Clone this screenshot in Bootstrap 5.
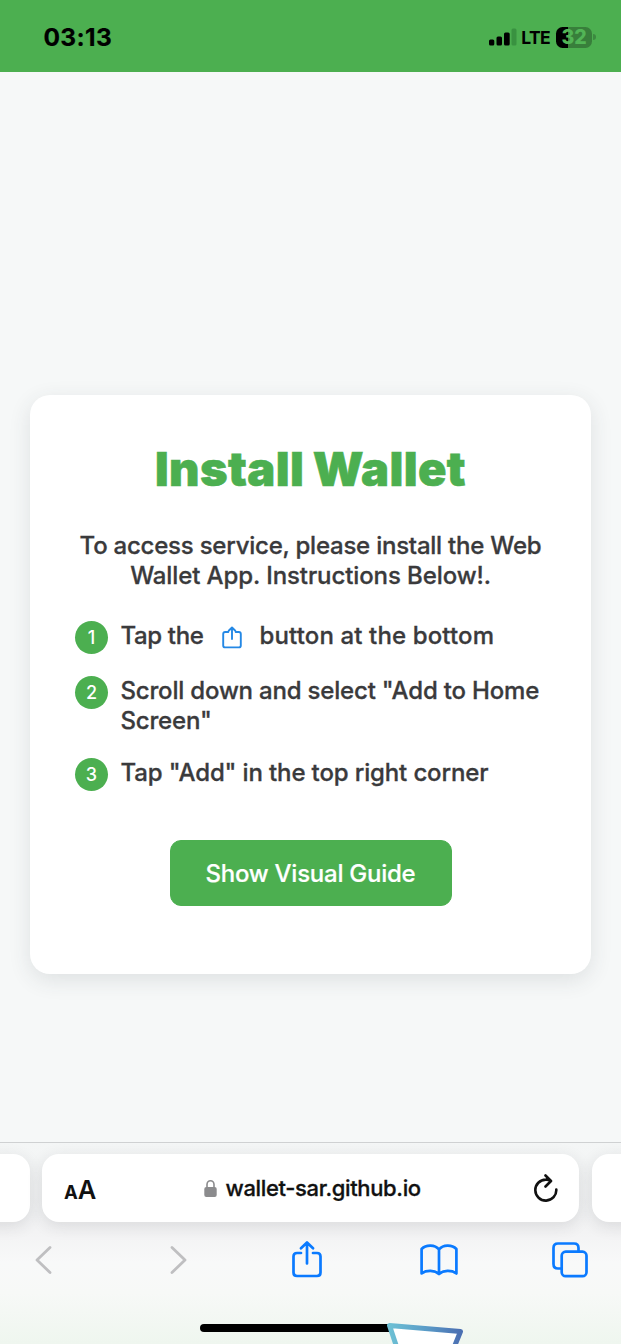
<!DOCTYPE html>
<html lang="en">
<head>
<meta charset="utf-8">
<meta name="viewport" content="width=device-width, initial-scale=1">
<title>Install Wallet</title>
<link href="https://cdn.jsdelivr.net/npm/bootstrap@5.3.0/dist/css/bootstrap.min.css" rel="stylesheet">
<style>
  :root { --brand: #4caf50; --ios-blue: #0a7aff; }
  body { font-family: Inter, "Liberation Sans", sans-serif; background: #f6f8f8; color: #3a3a3c; height: 1344px; overflow: hidden; }
  svg { display: block; flex: none; }
  .status-bar { height: 71.5px; background: var(--brand); color: #000; padding: 3px 25.5px 0 43.5px; }
  .clock { font-size: 24.5px; font-weight: 700; letter-spacing: .35px; -webkit-text-stroke: .2px #000; }
  .carrier { font-size: 17.5px; font-weight: 700; letter-spacing: -.65px; padding-top: 1px; margin: 0 6px 0 4.5px; }
  .battery { width: 36px; height: 21px; border-radius: 6.5px; background: linear-gradient(90deg, #000 11.5px, #387f3b 11.5px); color: #52b556; font-size: 19.5px; font-weight: 800; letter-spacing: 0; line-height: 21px; }
  .battery-tip { width: 2.5px; height: 6px; margin-left: 1px; border-radius: 0 3px 3px 0; background: #3c8940; }
  .page-area { height: 1070.5px; padding: 323px 30px 0; }
  .install-card { height: 579px; border: 0; border-radius: 20px; padding: 43px 45px 0; box-shadow: 0 6px 22px rgba(50,55,65,.12); }
  .install-card h1 { font-size: 47px; line-height: 62px; font-weight: 900; color: var(--brand); letter-spacing: .35px; word-spacing: -1px; -webkit-text-stroke: .6px var(--brand); }
  .intro, .steps { font-size: 24px; line-height: 30px; font-weight: 500; -webkit-text-stroke: .3px currentColor; }
  .intro { margin: 31px 0 30px; white-space: nowrap; }
  .line-a { letter-spacing: -.23px; }
  .line-b { letter-spacing: -.1px; }
  .steps { letter-spacing: -.19px; }
  .tap-text { letter-spacing: -.35px; }
  .bottom-text { letter-spacing: .13px; }
  .corner-text { letter-spacing: -.14px; }
  .steps li { margin-bottom: 25px; }
  .steps li:nth-child(2) { margin-bottom: 22.5px; }
  .steps li:last-child { margin-bottom: 0; }
  .step-number { width: 33px; height: 33px; margin: 0 12.500px -3px 0; border-radius: 50%; background: var(--brand); color: #fff; font-size: 18px; font-weight: 500; letter-spacing: 0; padding-top: 1px; -webkit-text-stroke: 0; flex: none; }
  .inline-share { margin: 3px 17.500px 0 18.500px; }
  .guide-btn { width: 282px; height: 66px; margin-top: 51.500px; border-radius: 11px; --bs-btn-bg: #4caf50; --bs-btn-color: #fff; --bs-btn-border-color: #4caf50; --bs-btn-hover-bg: #43a047; --bs-btn-hover-color: #fff; font-size: 24px; font-weight: 500; letter-spacing: -.25px; -webkit-text-stroke: .2px #fff; white-space: nowrap; padding: 2px 0 0; }
  .browser-bar { height: 202px; border-top: 1px solid #cfd1d2; background: linear-gradient(#f4f6f6 0, #f1f2f3 70px, #f3f3f4 90px, #f8f9f9 120px, #f7f9f7 150px, #eff6ef 200px); }
  .tab-strip { height: 79px; padding-top: 11px; gap: 12.5px; margin: 0 -30px; }
  .tab-pill { height: 68px; border-radius: 17px; background: #fff; box-shadow: 0 4px 16px rgba(40,40,50,.12); flex: none; }
  .side-tab { width: 59.5px; }
  .address { width: 537px; padding: 0 21px 0 22px; color: #111; }
  .aa-small { font-size: 18.5px; font-weight: 700; }
  .aa-large { font-size: 25.5px; font-weight: 600; }
  .site { margin-right: 6px; }
  .url { font-size: 22px; font-weight: 500; letter-spacing: -.36px; margin-left: 9px; padding-top: 1px; -webkit-text-stroke: .3px currentColor; }
  .tools { height: 75px; margin: 0 -15px 0 -22px; }
  .tools > * { flex: 1 1 0; display: flex; justify-content: center; }
  .forward { padding-left: 3px; margin-right: -3px; }
  .home-indicator { width: 196px; height: 7.5px; border-radius: 4px; background: #000; margin: 27px 0 0 199.500px; }
  .corner-shape { left: 383px; bottom: 0; }
</style>
</head>
<body class="position-relative">
<header class="status-bar d-flex align-items-center justify-content-between">
  <span class="clock">03:13</span>
  <div class="d-flex align-items-center">
    <svg width="28" height="18" viewBox="0 0 28 18"><g><rect x="0" y="11.500" width="5.300" height="6" rx="1.5"/><rect x="7.5" y="8.500" width="5.500" height="9" rx="1.5"/><rect x="15" y="4.500" width="5.700" height="13" rx="1.5"/><rect x="22.5" y=".5" width="5" height="17" rx="1.5" fill="#399240"/></g></svg>
    <span class="carrier">LTE</span>
    <span class="battery text-center">32</span><span class="battery-tip"></span>
  </div>
</header>

<main class="page-area">
  <section class="card install-card">
    <h1 class="text-center mb-0">Install Wallet</h1>
    <p class="intro text-center"><span class="line-a">To access service, please install the Web</span><br><span class="line-b">Wallet App. Instructions Below!.</span></p>
    <ol class="steps list-unstyled m-0">
      <li class="d-flex align-items-start"><span class="step-number d-flex align-items-center justify-content-center">1</span><span class="d-flex align-items-center"><span class="tap-text">Tap the</span>
        <svg class="inline-share" width="20" height="23" viewBox="0 0 20 23" fill="none" stroke="#2488e5" stroke-width="1.900" stroke-linecap="round" stroke-linejoin="round"><path d="M6.3 6H3.2Q1.2 6 1.2 8V19.4Q1.2 21.4 3.2 21.4H16.8Q18.8 21.4 18.8 19.4V8Q18.8 6 16.8 6H13.7M10 13V1.5M6.7 4.7 10 1.5l3.300 3.200"/></svg>
        <span class="bottom-text">button at the bottom</span></span></li>
      <li class="d-flex align-items-start"><span class="step-number d-flex align-items-center justify-content-center">2</span><span class="text-nowrap">Scroll down and select "Add to Home<br>Screen"</span></li>
      <li class="d-flex align-items-start"><span class="step-number d-flex align-items-center justify-content-center">3</span><span class="text-nowrap corner-text">Tap "Add" in the top right corner</span></li>
    </ol>
    <button type="button" class="btn guide-btn align-self-center">Show Visual Guide</button>
  </section>
</main>

<footer class="browser-bar">
  <div class="tab-strip d-flex">
    <div class="tab-pill side-tab"></div>
    <div class="tab-pill address d-flex align-items-center justify-content-between">
      <span class="d-flex align-items-baseline pt-1"><span class="aa-small">A</span><span class="aa-large">A</span></span>
      <span class="site d-flex align-items-center">
        <svg width="13" height="17" viewBox="0 0 13 17"><path d="M3 8V4.500a3.500 3.700 0 0 1 7 0V8" fill="none" stroke="#8b8b8d" stroke-width="1.600"/><rect x=".3" y="7" width="12.400" height="10" rx="2" fill="#8b8b8d"/></svg>
        <span class="url">wallet-sar.github.io</span>
      </span>
      <svg width="24" height="28" viewBox="0 0 24 28" fill="none" stroke="#111" stroke-width="2.600" stroke-linecap="round" stroke-linejoin="round"><path d="M22.300 15.500A10.500 10.500 0 1 1 11.800 5.600Q14.500 5.500 17 7M11.500 1.500 17 7l-5.500 5.500"/></svg>
    </div>
    <div class="tab-pill side-tab"></div>
  </div>
  <nav class="tools d-flex align-items-center">
    <span><svg width="17" height="28" viewBox="0 0 17 28" fill="none" stroke="#bfbfc1" stroke-width="2.800" stroke-linecap="round" stroke-linejoin="round"><path d="M15 1.500 2 14l13 12.500"/></svg></span>
    <span class="forward"><svg width="17" height="28" viewBox="0 0 17 28" fill="none" stroke="#bfbfc1" stroke-width="2.800" stroke-linecap="round" stroke-linejoin="round"><path d="m2 1.500 13 12.500L2 26.500"/></svg></span>
    <span><svg width="30" height="37" viewBox="0 0 30 37" fill="none" stroke="#0a7aff" stroke-width="2.700" stroke-linecap="round" stroke-linejoin="round"><path d="M9 12H5Q1.500 12 1.500 15.500V31.500Q1.500 35 5 35H25Q28.500 35 28.500 31.500V15.500Q28.500 12 25 12H21M15 22.500V1.500M9 7.200l6-5.700 6 5.700"/></svg></span>
    <span><svg width="38" height="32" viewBox="0 0 38 32" fill="none" stroke="#0a7aff" stroke-width="2.700" stroke-linecap="round" stroke-linejoin="round"><path d="M19 5.500C15 .5 6 .5 1.600 5V29.500C6 26 15 26 19 30 23 26 32 26 36.400 29.500V5C32 .5 23 .5 19 5.500ZV29.500"/></svg></span>
    <span><svg width="36" height="36" viewBox="0 0 36 36" fill="none" stroke="#0a7aff" stroke-width="2.700" stroke-linejoin="round"><rect x="9.700" y="9.700" width="24.800" height="24.500" rx="4"/><path d="M9.700 26.500H6Q1.500 26.500 1.500 22V6Q1.500 1.500 6 1.500H22Q26.500 1.500 26.500 6V9.700"/></svg></span>
  </nav>
  <div class="home-indicator"></div>
</footer>

<svg class="corner-shape position-absolute" width="84" height="24" viewBox="0 0 84 24">
  <defs><linearGradient id="edge"><stop offset="0" stop-color="#6dc0d4"/><stop offset=".5" stop-color="#5a9dc8"/><stop offset="1" stop-color="#4b6fb2"/></linearGradient></defs>
  <path d="M16 34 6.500 5.500 77.500 11.500 66 40Z" fill="#fff" stroke="url(#edge)" stroke-width="5" stroke-linejoin="round"/>
</svg>
<script src="https://cdn.jsdelivr.net/npm/bootstrap@5.3.0/dist/js/bootstrap.bundle.min.js"></script>
</body>
</html>
